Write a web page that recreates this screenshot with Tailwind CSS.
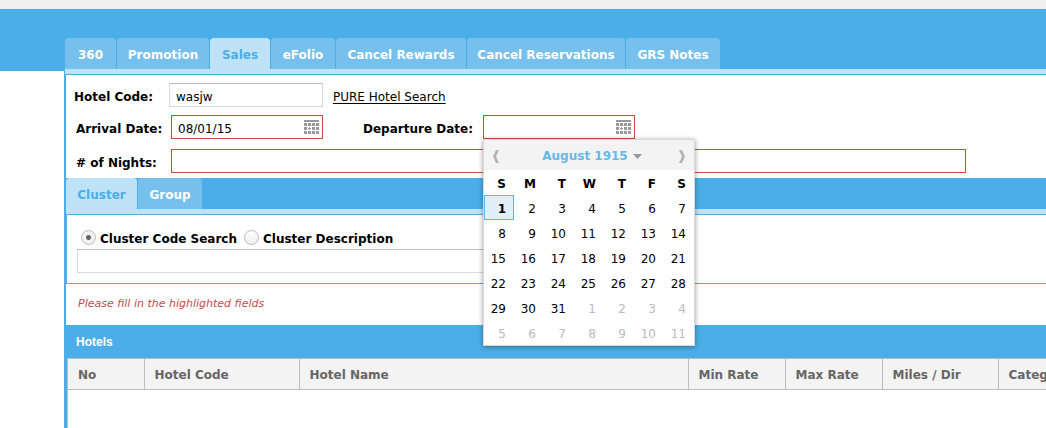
<!DOCTYPE html>
<html lang="en">
<head>
<meta charset="utf-8">
<title>Sales</title>
<script src="https://cdn.jsdelivr.net/npm/@tailwindcss/browser@4"></script>
</head>
<body class="flex h-screen flex-col overflow-hidden bg-white font-['Verdana','DejaVu_Sans',sans-serif] text-xs text-black">
<svg class="hidden" aria-hidden="true">
  <symbol id="cal" viewBox="0 0 15 14">
    <path fill="#999" d="M0 0h15v2H0zM0 3h3v3H0zM4 3h3v3H4zM8 3h3v3H8zM12 3h3v3h-3zM0 7h3v3H0zM5 7h1v1h1v1H6v1H5V9H4V8h1zM8 7h3v3H8zM12 7h3v3h-3zM0 11h3v3H0zM4 11h3v3H4zM8 11h3v3H8zM12 11h3v3h-3z"/>
  </symbol>
</svg>
<div class="h-[9px] shrink-0 bg-[#f0f0f0]"></div>
<div class="flex min-h-0 flex-1">
  <div class="w-16 shrink-0"><div class="h-[62px] bg-[#4baee8]"></div></div>
  <div class="flex min-w-0 flex-1 flex-col">
    <nav class="flex items-end gap-px bg-[#4baee8] pt-[29px] pl-px font-bold whitespace-nowrap text-white">
      <button class="h-[31px] w-[51px] rounded-t bg-[#76c0ee] pt-0.5">360</button>
      <button class="h-[31px] w-[92px] rounded-t bg-[#76c0ee] pt-0.5">Promotion</button>
      <button class="h-[31px] w-[60px] rounded-t bg-[#bfe3f6] pt-0.5 text-[#4baee8]">Sales</button>
      <button class="h-[31px] w-16 rounded-t bg-[#76c0ee] pt-0.5">eFolio</button>
      <button class="h-[31px] w-[130px] rounded-t bg-[#76c0ee] pt-0.5">Cancel Rewards</button>
      <button class="h-[31px] w-[158px] rounded-t bg-[#76c0ee] pt-0.5">Cancel Reservations</button>
      <button class="h-[31px] w-[94px] rounded-t bg-[#76c0ee] pt-0.5">GRS Notes</button>
    </nav>
    <div class="border-b border-l border-[#4baee8] bg-[#bfe3f6] pt-[5px]"></div>
    <main class="flex min-h-0 flex-1 flex-col border-l-2 border-[#4baee8]">
      <form class="flex shrink-0 flex-col pt-2">
        <div class="flex h-6 items-center pl-2">
          <label for="code" class="w-[95px] pt-1 font-bold">Hotel Code:</label>
          <input id="code" value="wasjw" class="h-6 w-[154px] border border-[#d9d9d9] border-t-[#bdbdbd] pt-1 pl-1.5 outline-none">
          <a href="#" class="ml-2.5 pt-1 underline underline-offset-2">PURE Hotel Search</a>
        </div>
        <div class="mt-2 flex h-6 items-center pl-2.5">
          <label for="arr" class="w-[95px] pt-1 font-bold whitespace-nowrap">Arrival Date:</label>
          <div class="flex h-6 w-[152px] items-center border border-[#cf4c35] pr-[3px]">
            <input id="arr" value="08/01/15" class="h-full min-w-0 flex-1 pt-1 pl-1.5 outline-none">
            <button type="button" aria-label="Open calendar"><svg class="block h-3.5 w-[15px]"><use href="#cal"/></svg></button>
          </div>
          <label for="dep" class="ml-10 w-[120px] pt-1 font-bold whitespace-nowrap">Departure Date:</label>
          <div class="relative flex h-6 w-[152px] items-center border border-[#cf4c35] pr-[3px]">
            <input id="dep" class="h-full min-w-0 flex-1 pl-1.5 outline-none">
            <button type="button" aria-label="Open calendar"><svg class="block h-3.5 w-[15px]"><use href="#cal"/></svg></button>
            <div class="absolute top-full -left-px z-10 mt-px w-[212px] border border-[#d9d9d9] bg-white shadow-[0_1px_5px_rgba(0,0,0,0.4)]">
              <div class="flex h-[30px] items-center justify-between bg-[#f3f3f3] px-2 pt-0.5">
                <button type="button" aria-label="Previous month"><svg class="block h-[13px] w-[7px]" viewBox="0 0 7 13" fill="#b3b3b3"><path d="M4 0h3L4 6.500l3 6.500H4L1 6.500z"/></svg></button>
                <button type="button" class="flex items-center gap-[5px] pl-1.5 font-bold text-[#67b9ea]">August 1915<svg class="h-[5px] w-[9px]" viewBox="0 0 9 5" fill="#999"><path d="M0 0h9L4.500 5z"/></svg></button>
                <button type="button" aria-label="Next month"><svg class="block h-[13px] w-[7px]" viewBox="0 0 7 13" fill="#b3b3b3"><path d="M3 0H0l3 6.500L0 13h3l3-6.500z"/></svg></button>
              </div>
              <table class="w-full table-fixed border-collapse text-right [&_td]:h-[25px] [&_td]:p-0 [&_td]:pt-0.5 [&_td]:pr-2 [&_th]:h-[25px] [&_th]:p-0 [&_th]:pt-0.5 [&_th]:pr-2">
                <thead><tr><th>S</th><th>M</th><th>T</th><th>W</th><th>T</th><th>F</th><th>S</th></tr></thead>
                <tbody>
                  <tr><td class="bg-[#dff0fb] font-bold inset-ring inset-ring-[#62b5e8]">1</td><td>2</td><td>3</td><td>4</td><td>5</td><td>6</td><td>7</td></tr>
                  <tr><td>8</td><td>9</td><td>10</td><td>11</td><td>12</td><td>13</td><td>14</td></tr>
                  <tr><td>15</td><td>16</td><td>17</td><td>18</td><td>19</td><td>20</td><td>21</td></tr>
                  <tr><td>22</td><td>23</td><td>24</td><td>25</td><td>26</td><td>27</td><td>28</td></tr>
                  <tr><td>29</td><td>30</td><td>31</td><td class="text-[#bbb]">1</td><td class="text-[#bbb]">2</td><td class="text-[#bbb]">3</td><td class="text-[#bbb]">4</td></tr>
                  <tr class="text-[#bbb]"><td>5</td><td>6</td><td>7</td><td>8</td><td>9</td><td>10</td><td>11</td></tr>
                </tbody>
              </table>
            </div>
          </div>
        </div>
        <div class="mt-2.5 flex h-6 items-center pr-20 pl-2.5">
          <label for="nights" class="w-[95px] shrink-0 pt-1 font-bold whitespace-nowrap"># of Nights:</label>
          <input id="nights" class="h-6 min-w-0 flex-1 border border-[#cf4c35] pl-1.5 outline-none">
        </div>
        <div class="mt-[5px] flex gap-px bg-[#4baee8] font-bold text-white">
          <button type="button" class="h-[31px] w-[71px] rounded-t bg-[#bfe3f6] pt-0.5 text-[#4baee8]">Cluster</button>
          <button type="button" class="h-[31px] w-16 rounded-t bg-[#76c0ee] pt-0.5">Group</button>
        </div>
        <div class="border-b border-[#4baee8] bg-[#bfe3f6] pt-[5px]"></div>
        <div class="border-b border-l border-[#4baee8] px-2.5 pt-[15px] pb-2.5">
          <div class="flex h-[19px] items-start pl-1 font-bold">
            <input id="r1" type="radio" name="by" checked class="size-[15px] appearance-none rounded-full border border-[#bbb] bg-[radial-gradient(circle,#666_0_2px,#f3f3f3_3px)]">
            <label for="r1" class="ml-1 w-36 pt-px whitespace-nowrap">Cluster Code Search</label>
            <input id="r2" type="radio" name="by" class="size-[15px] appearance-none rounded-full border border-[#bbb] bg-linear-to-b from-white to-[#eee]">
            <label for="r2" class="ml-1 pt-px whitespace-nowrap">Cluster Description</label>
          </div>
          <input aria-label="Cluster" class="block h-6 w-[500px] border border-[#d9d9d9] border-t-[#bdbdbd] pl-1.5 outline-none">
        </div>
        <p class="flex h-[41px] items-center pl-3 text-[11px] text-[#c84b4b] italic">Please fill in the highlighted fields</p>
      </form>
      <section class="flex min-h-0 flex-1 flex-col overflow-hidden">
        <h2 class="flex h-[33px] shrink-0 items-center bg-[#4baee8] pl-2.5 font-['Liberation_Sans',Arial,sans-serif] font-bold text-white">Hotels</h2>
        <div class="flex min-h-0 flex-1 border-l border-[#4baee8]">
          <div class="flex-1 overflow-hidden border-l border-[#bdbdbd]">
            <table class="w-[1100px] table-fixed border-collapse text-left text-[#666]">
              <thead>
                <tr class="h-[31px] border-y border-[#bdbdbd] bg-[#f3f3f3] whitespace-nowrap [&>th]:border-r [&>th]:border-[#bdbdbd] [&>th]:py-0 [&>th]:pt-0.5 [&>th]:pr-0 [&>th]:pl-2.5">
                  <th class="w-[76px]">No</th><th class="w-[155px]">Hotel Code</th><th class="w-[389px]">Hotel Name</th><th class="w-[97px]">Min Rate</th><th class="w-[97px]">Max Rate</th><th class="w-[116px]">Miles / Dir</th><th>Category</th>
                </tr>
              </thead>
            </table>
          </div>
        </div>
      </section>
    </main>
  </div>
</div>
</body>
</html>
